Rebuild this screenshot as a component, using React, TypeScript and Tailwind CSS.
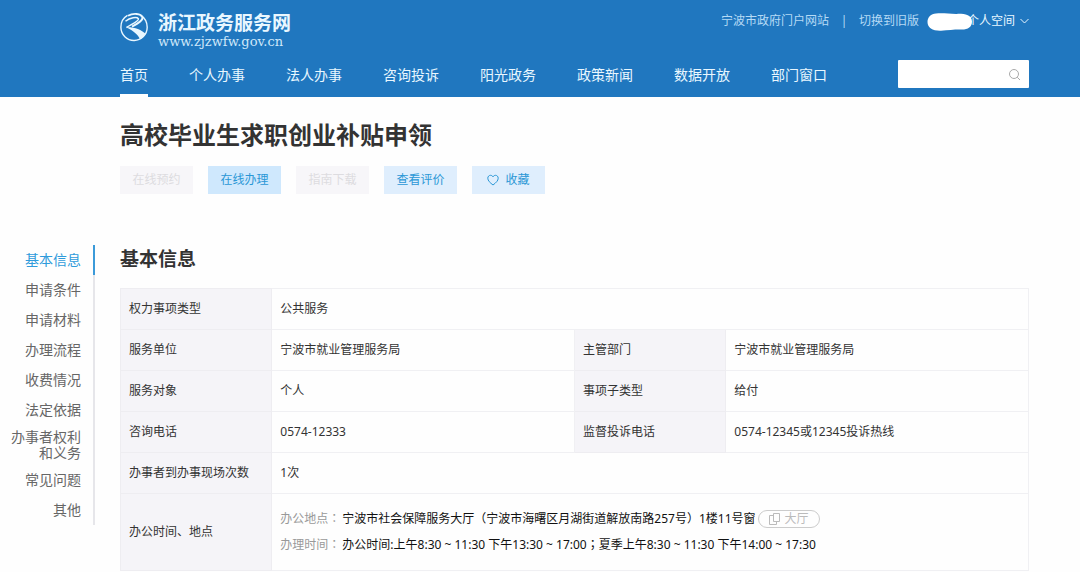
import React from "react";

const navItems = ["首页", "个人办事", "法人办事", "咨询投诉", "阳光政务", "政策新闻", "数据开放", "部门窗口"];

const sideItems = [
  "基本信息",
  "申请条件",
  "申请材料",
  "办理流程",
  "收费情况",
  "法定依据",
  "办事者权利和义务",
  "常见问题",
  "其他",
];

const rows: string[][] = [
  ["权力事项类型", "公共服务"],
  ["服务单位", "宁波市就业管理服务局", "主管部门", "宁波市就业管理服务局"],
  ["服务对象", "个人", "事项子类型", "给付"],
  ["咨询电话", "0574-12333", "监督投诉电话", "0574-12345或12345投诉热线"],
  ["办事者到办事现场次数", "1次"],
];

function Logo() {
  return (
    <svg viewBox="0 0 28 30" className="h-[30px] w-7 shrink-0" fill="none" stroke="#e9f7ff" aria-hidden="true">
      <path
        d="M7.500 3.300C3.500 5.600.9 10 .9 15.200 1 22.700 6.900 28.600 14.200 28.500 21.400 28.400 27.100 22.600 27.200 15.300 27.200 10.300 24.800 6 21 3.400"
        strokeWidth="1.400"
      />
      <path d="M8 3.800C13 .9 21 1.300 22.400 5.300 23.300 8.300 18.500 11.200 12 14.600" strokeWidth="1.900" />
      <path d="M5.500 9.200C10 5.400 17 4.700 18.400 6.700 19.300 9 12 12 6.500 15.500" strokeWidth="1.500" />
      <path
        d="M6 15.200C14 14.800 21.500 17.500 25.600 21.800 24.500 24.200 22.500 26.200 20 27.300 18 22.500 13 18.300 6 15.200Z"
        fill="#e9f7ff"
        stroke="none"
      />
    </svg>
  );
}

function Header() {
  return (
    <header className="bg-[#2077bf] pl-[120px] pr-[51px] text-[#e9f7ff]">
      <div className="flex h-[54px] justify-between">
        <a href="#" className="flex items-start gap-[10px] pt-3">
          <Logo />
          <span className="flex flex-col">
            <span className="text-[19px] font-bold leading-[22px]">浙江政务服务网</span>
            <span className="font-['DejaVu_Serif',serif] text-[13px] leading-4 text-[#cfe8fa]">www.zjzwfw.gov.cn</span>
          </span>
        </a>
        <div className="flex h-[42px] items-center text-xs text-[#b5daf5]">
          <a href="#">宁波市政府门户网站</a>
          <span className="w-[30px] text-center">|</span>
          <a href="#">切换到旧版</a>
          <button type="button" className="relative ml-12 flex items-center gap-[5px] text-[#e9f7ff]">
            <svg viewBox="0 0 45 18" className="absolute -left-10 top-0 h-[18px] w-[45px]" fill="#fff" aria-hidden="true">
              <path d="M9 .5C16-.2 22 1 30 .9 37 .6 45 2 45 8.500 45 14 41 16.500 35 16.500 28 16.300 22 17 14 17.700 6 18 .5 15 .5 9 .5 4 4 1 9 .5Z" />
            </svg>
            个人空间
            <svg viewBox="0 0 9 6" className="h-[6px] w-[9px]" fill="none" stroke="currentColor" aria-hidden="true">
              <path d="M.5 1l4 4 4-4" />
            </svg>
          </button>
        </div>
      </div>
      <div className="flex h-[43px] justify-between">
        <nav className="flex gap-[41px] text-sm">
          {navItems.map((item, i) => (
            <a
              key={item}
              href="#"
              className={
                i === 0
                  ? "whitespace-nowrap border-b-[3px] border-white leading-[42px]"
                  : "whitespace-nowrap border-b-[3px] border-transparent leading-[42px]"
              }
            >
              {item}
            </a>
          ))}
        </nav>
        <form className="mt-[6px] flex h-7 w-[131px] items-center rounded-[1px] bg-white pr-2">
          <input type="text" aria-label="搜索" className="h-full min-w-0 flex-1 px-2 text-xs text-[#333] outline-none" />
          <button type="submit" aria-label="搜索" className="text-[#aaa]">
            <svg viewBox="0 0 13 13" className="size-[13px]" fill="none" stroke="currentColor" aria-hidden="true">
              <circle cx="6" cy="6" r="4.500" />
              <path d="M9.200 9.200L12 12" />
            </svg>
          </button>
        </form>
      </div>
    </header>
  );
}

function Actions() {
  const base = "flex h-7 w-[73px] items-center justify-center text-xs";
  return (
    <div className="mt-[15px] flex gap-[15px]">
      <button type="button" disabled className={`${base} bg-[#f7f6f9] text-[#dddce0]`}>在线预约</button>
      <button type="button" className={`${base} bg-[#cfe8fd] text-[#2a97d6]`}>在线办理</button>
      <button type="button" disabled className={`${base} bg-[#f7f6f9] text-[#dddce0]`}>指南下载</button>
      <button type="button" className={`${base} bg-[#dfeefd] text-[#2a97d6]`}>查看评价</button>
      <button type="button" className={`${base} gap-[6px] bg-[#dfeefd] text-[#2a97d6]`}>
        <svg viewBox="0 0 12 12" className="size-3" fill="none" stroke="currentColor" aria-hidden="true">
          <path d="M6 11C3 8.700.8 6.700.8 4.200.8 2.500 2 1.300 3.500 1.300 4.600 1.300 5.500 1.900 6 2.900 6.500 1.900 7.400 1.300 8.500 1.300 10 1.300 11.200 2.500 11.200 4.200 11.200 6.700 9 8.700 6 11Z" />
        </svg>
        收藏
      </button>
    </div>
  );
}

function SideNav() {
  return (
    <nav className="w-[95px] shrink-0">
      <ul className="text-right text-sm text-[#666]">
        {sideItems.map((item, i) => (
          <li
            key={item}
            className={
              i === 0
                ? "border-r-2 border-[#3b9ad9] py-[7px] pl-2 pr-3 leading-4 text-[#2f9bdb]"
                : i === 6
                  ? "border-r-2 border-[#e6e6ea] py-1 pl-2 pr-3 leading-4"
                  : "border-r-2 border-[#e6e6ea] py-[7px] pl-2 pr-3 leading-4"
            }
          >
            <a href="#">{item}</a>
          </li>
        ))}
      </ul>
    </nav>
  );
}

function Mark({ children }: { children: string }) {
  return <span lang="zh-TW" className="font-['Noto_Sans_CJK_TC',sans-serif] leading-none">{children}</span>;
}

function InfoTable() {
  const th = "border border-[#eeedf1] bg-[#f5f4f8] px-2 text-left font-normal";
  const td = "border border-[#f0f0f3] px-2";
  return (
    <table className="mt-[15px] w-full table-fixed border-collapse text-xs text-[#333]">
      <colgroup>
        <col className="w-1/6" />
        <col className="w-1/3" />
        <col className="w-1/6" />
        <col className="w-1/3" />
      </colgroup>
      <tbody>
        {rows.map((r) => (
          <tr key={r[0]} className="h-[41px]">
            <th scope="row" className={th}>{r[0]}</th>
            <td className={td} colSpan={r.length === 2 ? 3 : 1}>{r[1]}</td>
            {r.length === 4 && <th scope="row" className={th}>{r[2]}</th>}
            {r.length === 4 && <td className={td}>{r[3]}</td>}
          </tr>
        ))}
        <tr className="h-[77px]">
          <th scope="row" className={th}>办公时间、地点</th>
          <td className={td} colSpan={3}>
            <p className="flex h-[26px] items-center gap-[2px] text-[#111]">
              <span className="text-[#999]">办公地点<Mark>：</Mark></span>
              <span>宁波市社会保障服务大厅（宁波市海曙区月湖街道解放南路257号）1楼11号窗</span>
              <a
                href="#"
                className="flex h-[18px] items-center gap-1 rounded-full border border-[#ccc] px-[10px] text-[#bbb]"
              >
                <svg viewBox="0 0 12 12" className="size-3" fill="none" stroke="currentColor" aria-hidden="true">
                  <path d="M4.500.5h6v8h-6zM4.500 2.500h-4v9h7v-3" />
                </svg>
                大厅
              </a>
            </p>
            <p className="flex h-[26px] items-center gap-[2px] text-[#111]">
              <span className="text-[#999]">办理时间<Mark>：</Mark></span>
              <span>
                办公时间:上午8:30 ~ 11:30 下午13:30 ~ 17:00<Mark>；</Mark>夏季上午8:30 ~ 11:30 下午14:00 ~ 17:30
              </span>
            </p>
          </td>
        </tr>
      </tbody>
    </table>
  );
}

export default function App() {
  return (
    <div className="min-h-screen bg-[#fefefe] font-['Noto_Sans','Noto_Sans_CJK_SC',sans-serif]">
      <Header />
      <section className="pl-[120px] pr-[51px] pt-[22px]">
        <h1 className="text-2xl font-bold leading-8 text-[#333]">高校毕业生求职创业补贴申领</h1>
        <Actions />
      </section>
      <div className="mt-[51px] flex">
        <SideNav />
        <main className="min-w-0 flex-1 pl-[25px] pr-[51px]">
          <h2 className="text-[19px] font-bold leading-7 text-[#333]">基本信息</h2>
          <InfoTable />
        </main>
      </div>
    </div>
  );
}
